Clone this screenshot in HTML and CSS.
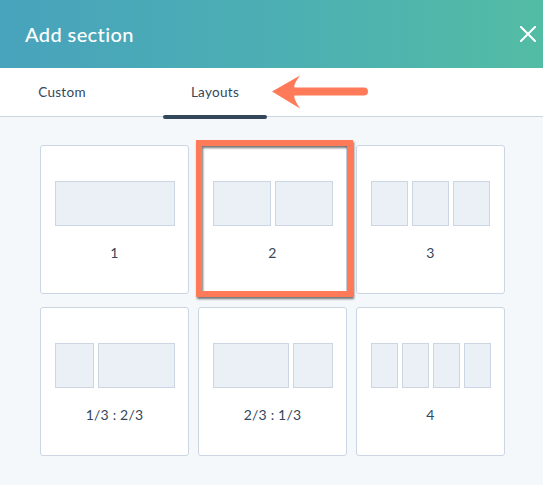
FILE: index.html
```html
<!DOCTYPE html>
<html>
<head>
<meta charset="utf-8">
<link rel="stylesheet" href="styles.css">
</head>
<body>
<div class="panel">
  <header class="header">
    <h1 class="title">Add section</h1>
    <button class="close" aria-label="Close">
      <svg width="16" height="16" viewBox="0 0 16 16"><path d="M1 1L15 15M15 1L1 15" stroke="#fff" stroke-width="2" stroke-linecap="square"/></svg>
    </button>
  </header>
  <nav class="tabs">
    <div class="tab">Custom</div>
    <div class="tab active">Layouts</div>
    <svg class="arrow" width="104" height="40" viewBox="0 0 104 40"><path d="M4 19.5L32 3.5Q25 13 26.5 15.5L96 15.5A4 4 0 0 1 96 23.5L26.5 23.5Q25 26 32 36.5Z" fill="#ff7a59"/></svg>
  </nav>
  <main class="content">
    <div class="grid">
      <div class="card">
        <div class="preview"><span class="col"></span></div>
        <div class="label">1</div>
      </div>
      <div class="card">
        <div class="preview"><span class="col"></span><span class="col"></span></div>
        <div class="label">2</div>
        <div class="highlight"></div>
      </div>
      <div class="card">
        <div class="preview"><span class="col"></span><span class="col"></span><span class="col"></span></div>
        <div class="label">3</div>
      </div>
      <div class="card">
        <div class="preview"><span class="col"></span><span class="col wide"></span></div>
        <div class="label">1/3 : 2/3</div>
      </div>
      <div class="card">
        <div class="preview"><span class="col wide"></span><span class="col"></span></div>
        <div class="label">2/3 : 1/3</div>
      </div>
      <div class="card">
        <div class="preview"><span class="col"></span><span class="col"></span><span class="col"></span><span class="col"></span></div>
        <div class="label">4</div>
      </div>
    </div>
  </main>
</div>
</body>
</html>
```
FILE: styles.css
```css
* { box-sizing: border-box; }
html, body { margin: 0; padding: 0; }
body {
  font-family: Lato, "Open Sans", sans-serif;
  color: #33475b;
  background: #f5f8fa;
  width: 543px;
  height: 485px;
  overflow: hidden;
}
.panel { display: flex; flex-direction: column; height: 485px; }
.header {
  height: 68px;
  display: flex;
  align-items: center;
  padding-left: 25px;
  background: linear-gradient(90deg, #48a3bc 0%, #4cb0b2 55%, #53bca4 100%);
}
.title {
  margin: 0;
  font-size: 20px;
  font-weight: 500;
  color: #fff;
  letter-spacing: 0.4px;
}
.close {
  margin-left: auto;
  margin-right: 7px;
  background: none;
  border: 0;
  padding: 0;
  width: 16px;
  height: 16px;
  display: block;
}
.close svg { display: block; }
.tabs {
  position: relative;
  height: 49px;
  background: #fff;
  border-bottom: 1px solid #cbd6e2;
  display: flex;
  padding-left: 10px;
  gap: 49px;
}
.tab {
  position: relative;
  width: 104px;
  display: flex;
  align-items: center;
  justify-content: center;
  font-size: 13.5px;
  letter-spacing: 0.3px;
  color: #33475b;
  padding-bottom: 1px;
}
.tab.active::after {
  content: "";
  position: absolute;
  left: 0;
  right: 0;
  bottom: -3px;
  height: 4px;
  border-radius: 2px;
  background: #33475b;
}
.arrow {
  position: absolute;
  left: 268px;
  top: 4px;
}
.content {
  flex: 1;
  padding: 28px 0 0 40px;
}
.grid {
  display: grid;
  grid-template-columns: repeat(3, 149px);
  grid-auto-rows: 149px;
  column-gap: 9px;
  row-gap: 13px;
}
.card {
  position: relative;
  background: #fff;
  border: 1px solid #cbd6e2;
  border-radius: 3px;
  padding: 35px 14px 0 14px;
  display: flex;
  flex-direction: column;
  align-items: center;
}
.preview {
  width: 120px;
  height: 45px;
  display: flex;
  gap: 4px;
}
.col {
  flex: 1;
  background: #eaf0f6;
  border: 1px solid #cbd6e2;
}
.col.wide { flex: 2; }
.label {
  margin-top: 17px;
  font-size: 14px;
  line-height: 20px;
  letter-spacing: 0.2px;
  color: #33475b;
}
.highlight {
  position: absolute;
  left: -3px;
  top: -6px;
  right: -7px;
  bottom: -4px;
  border: 6px solid #ff7a59;
  filter: drop-shadow(1px 2px 1px rgba(0,0,0,0.55));
}
```
